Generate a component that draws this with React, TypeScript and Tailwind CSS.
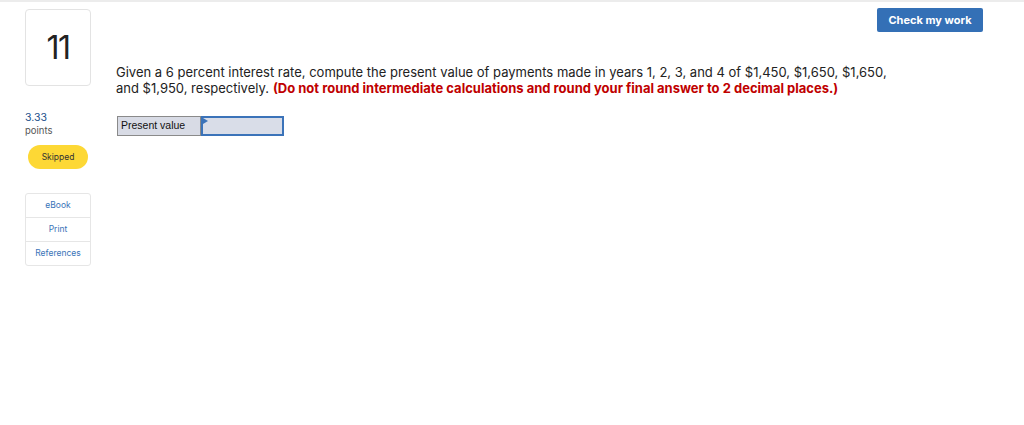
export default function App() {
  return (
    <div className="relative h-[425px] w-[1024px] overflow-hidden border-t-2 border-[#ececec] bg-white font-['Inter',sans-serif] text-[#222]">
      <div className="flex">
        {/* left column */}
        <div className="flex w-[116px] flex-col pl-[25px] pt-[7px]">
          <div className="flex h-[77px] w-[66px] items-center justify-center rounded-[4px] border border-[#e3e3e3]">
            <span className="text-[32px] leading-none tracking-[-1.5px] text-[#222]">11</span>
          </div>
          <div className="mt-[25px] text-[10.5px] leading-[14px] text-[#1a4f8b]">3.33</div>
          <div className="text-[9.5px] leading-[12px] text-[#555]">points</div>
          <div className="ml-[3px] mt-[8px] flex h-[24px] w-[60px] items-center justify-center rounded-full bg-[#fdd835] text-[8.5px] text-[#333]">
            Skipped
          </div>
          <div className="mt-[24px] flex w-[66px] flex-col rounded-[3px] border border-[#e6e6e6] text-[8.5px] text-[#3a74b8]">
            <div className="flex h-[24px] items-center justify-center border-b border-[#e6e6e6]">eBook</div>
            <div className="flex h-[24px] items-center justify-center border-b border-[#e6e6e6]">Print</div>
            <div className="flex h-[23px] items-center justify-center">References</div>
          </div>
        </div>

        {/* question */}
        <div className="pt-[63px]">
          <div className="text-[13px] leading-[15.5px] text-[#222]">
            <p>
              Given a 6 percent interest rate, compute the present value of payments made in years 1, 2, 3, and 4 of $1,450, $1,650, $1,650,
            </p>
            <p className="flex gap-[4px]">
              <span>and $1,950, respectively.</span>
              <span className="font-bold text-[#c00000]">
                (Do not round intermediate calculations and round your final answer to 2 decimal places.)
              </span>
            </p>
          </div>
          <div className="ml-[1px] mt-[20px] flex h-[20px] font-['Liberation_Sans',sans-serif]">
            <div className="flex w-[84px] items-center border border-[#8a8a8a] bg-[#d8dbe5] pl-[3px] text-[10.5px] text-[#111]">
              Present value
            </div>
            <div className="relative w-[83px] border-2 border-[#3b73b9] bg-[#d9dde8]">
              <svg className="absolute left-0 top-0" width="5" height="6" viewBox="0 0 5 6">
                <path d="M0 0 L5 3 L0 6 Z" fill="#3b73b9" />
              </svg>
            </div>
          </div>
        </div>
      </div>

      <button className="absolute left-[877px] top-[6px] flex h-[24px] w-[106px] items-center justify-center rounded-[2px] bg-[#3470b6] text-[11px] font-bold text-white">
        Check my work
      </button>
    </div>
  )
}
